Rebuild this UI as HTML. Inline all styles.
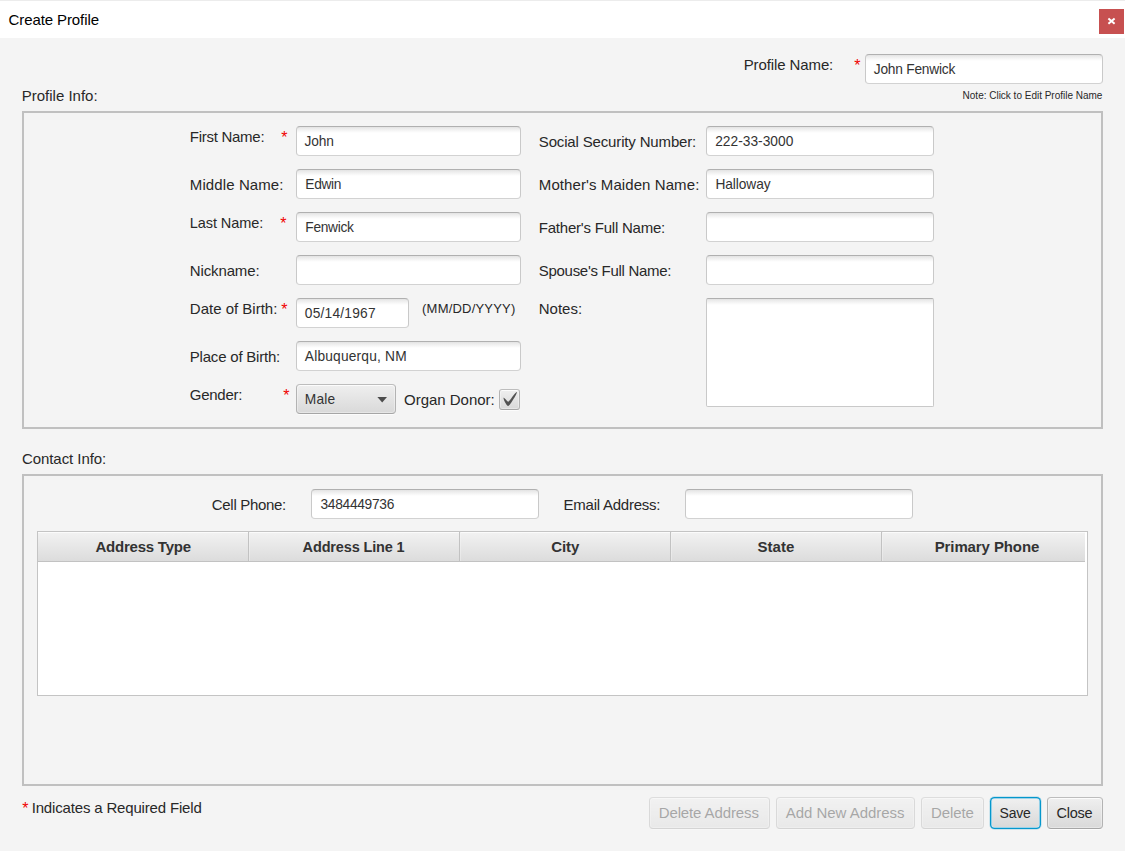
<!DOCTYPE html>
<html lang="en"><head><meta charset="utf-8"><title>Create Profile</title>
<style>
html,body{margin:0;padding:0}
body{width:1125px;height:851px;position:relative;overflow:hidden;background:#f4f4f4;font-family:"Liberation Sans",sans-serif}
.t{position:absolute;white-space:nowrap;line-height:1;margin:0;font-weight:400}
.abs{position:absolute;box-sizing:border-box}
.titlebar{left:0;top:0;width:1125px;height:38px;background:#fff;border-top:1px solid #ececec}
.closebtn{left:1099px;top:8px;width:25px;height:25px;background:#c75050}
.closebtn svg{display:block}
.grp{border:2px solid #c0c0c0}
.tf,.ta{border:1px solid #c9c9c9;border-top-color:#b0b0b0;background:linear-gradient(#e2e2e2 0,#e9e9e9 1px,#fbfbfb 5px,#fff 6px)}
.tf{height:30px;border-bottom-color:#d2d2d2;border-radius:4px}
.ta{border-radius:2px}
.btn{height:32px;border-radius:4px;border:1px solid #b3b3b3;border-top-color:#bdbdbd;border-bottom-color:#a6a6a6;background:linear-gradient(#efefef,#d9d9d9);box-shadow:inset 0 1px 0 rgba(255,255,255,.75),inset 0 0 0 1px rgba(255,255,255,.35),0 1px 0 rgba(255,255,255,.7)}
.dis{opacity:.4}
.chk{border-radius:3px}
.ast{color:#f00000;font-size:16px}
.tbl{border:1px solid #c4c4c4;background:#fff}
.thead{left:0;top:0;width:1047px;height:30px;background:linear-gradient(#f2f2f2,#dcdcdc);border-bottom:1px solid #c2c2c2;box-shadow:inset 0 1px 0 #fbfbfb}
.sep{top:0;width:2px;height:29px;border-left:1px solid #c2c2c2;background:linear-gradient(#f4f4f4,#e6e6e6)}
.focus{left:987px;top:794px}
</style></head>
<body>
<div class="abs titlebar"><span class="t" style="left:8.5px;top:11px;font-size:15px;color:#000;letter-spacing:-0.094px;">Create Profile</span><div class="abs closebtn"><svg width="25" height="25" viewBox="0 0 25 25"><path d="M9.4 9.5 L15.6 14.7 M15.6 9.5 L9.4 14.7" stroke="#fff" stroke-width="2" fill="none"/></svg></div></div>
<span class="t" style="left:743.7px;top:57px;font-size:15px;color:#282828;letter-spacing:-0.106px;">Profile Name:</span>
<span class="t ast" style="left:854.32px;top:57.65px">*</span>
<div class="abs tf" style="left:865px;top:54px;width:238px;"><span class="t" style="left:7.8px;top:8px;font-size:13.75px;color:#333;letter-spacing:-0.234px;">John Fenwick</span></div>
<span class="t" style="left:962.6px;top:91px;font-size:10px;color:#282828;letter-spacing:-0.008px;">Note: Click to Edit Profile Name</span>
<span class="t" style="left:21.8px;top:88px;font-size:15px;color:#282828;letter-spacing:-0.006px;">Profile Info:</span>
<div class="abs grp" style="left:22px;top:111px;width:1081px;height:318px;">
<span class="t" style="left:165.8px;top:16px;font-size:15px;color:#282828;letter-spacing:-0.272px;">First Name:</span>
<span class="t ast" style="left:257.32px;top:16.65px">*</span>
<div class="abs tf" style="left:272px;top:13px;width:225px;"><span class="t" style="left:7.5px;top:8px;font-size:13.75px;color:#333;letter-spacing:-0.143px;">John</span></div>
<span class="t" style="left:165.8px;top:64px;font-size:15px;color:#282828;letter-spacing:0.105px;">Middle Name:</span>
<div class="abs tf" style="left:272px;top:56px;width:225px;"><span class="t" style="left:8.3px;top:8px;font-size:13.75px;color:#333;letter-spacing:-0.338px;">Edwin</span></div>
<span class="t" style="left:165.8px;top:103px;font-size:14.5px;color:#282828;letter-spacing:-0.083px;">Last Name:</span>
<span class="t ast" style="left:256.37px;top:102.65px">*</span>
<div class="abs tf" style="left:272px;top:99px;width:225px;"><span class="t" style="left:8.3px;top:8px;font-size:13.75px;color:#333;letter-spacing:-0.306px;">Fenwick</span></div>
<span class="t" style="left:165.8px;top:150px;font-size:15px;color:#282828;letter-spacing:-0.132px;">Nickname:</span>
<div class="abs tf" style="left:272px;top:142px;width:225px;"></div>
<span class="t" style="left:165.8px;top:188px;font-size:15px;color:#282828;letter-spacing:0.004px;">Date of Birth:</span>
<span class="t ast" style="left:257.32px;top:188.65px">*</span>
<div class="abs tf" style="left:272px;top:185px;width:113px;"><span class="t" style="left:7.8px;top:8px;font-size:13.75px;color:#333;letter-spacing:0.219px;">05/14/1967</span></div>
<span class="t" style="left:398.1px;top:189px;font-size:13px;color:#282828;letter-spacing:0.200px;">(MM/DD/YYYY)</span>
<span class="t" style="left:165.8px;top:236px;font-size:15px;color:#282828;letter-spacing:-0.206px;">Place of Birth:</span>
<div class="abs tf" style="left:272px;top:228px;width:225px;"><span class="t" style="left:7.8px;top:8px;font-size:13.75px;color:#333;letter-spacing:0.188px;">Albuquerqu, NM</span></div>
<span class="t" style="left:165.8px;top:274px;font-size:15px;color:#282828;letter-spacing:-0.267px;">Gender:</span>
<span class="t ast" style="left:259.32px;top:274.65px">*</span>
<div class="abs btn" style="left:272px;top:271px;width:100px;height:30px;"><span class="t" style="left:7.8px;top:8px;font-size:13.75px;color:#333;letter-spacing:0.163px;">Male</span><svg width="10" height="6" viewBox="0 0 10 6" style="position:absolute;left:80px;top:12px"><path d="M0.4 0 L10 0 L5.2 5.4 Z" fill="#4c4c4c"/></svg></div>
<span class="t" style="left:380.0px;top:279px;font-size:15px;color:#282828;letter-spacing:-0.017px;">Organ Donor:</span>
<div class="abs btn chk" style="left:475px;top:276px;width:21px;height:21px;"><svg width="19" height="19" viewBox="0 0 19 19" style="position:absolute;left:0;top:0"><path transform="translate(3.8,2.7) scale(0.82)" d="M-0.25,6.083c0.843-0.758,4.583,4.833,5.75,4.833S14.5-1.5,15.917-0.917c1.292,0.532-8.75,17.083-10.5,17.083C3,16.167-1.083,6.833-0.25,6.083z" fill="#525252"/></svg></div>
<span class="t" style="left:514.8px;top:21px;font-size:15px;color:#282828;letter-spacing:-0.155px;">Social Security Number:</span>
<div class="abs tf" style="left:682px;top:13px;width:228px;"><span class="t" style="left:8.2px;top:8px;font-size:13.75px;color:#333;letter-spacing:0.012px;">222-33-3000</span></div>
<span class="t" style="left:514.8px;top:64px;font-size:15px;color:#282828;letter-spacing:0.087px;">Mother&#x27;s Maiden Name:</span>
<div class="abs tf" style="left:682px;top:56px;width:228px;"><span class="t" style="left:8.4px;top:8px;font-size:13.75px;color:#333;letter-spacing:-0.071px;">Halloway</span></div>
<span class="t" style="left:514.8px;top:107px;font-size:15px;color:#282828;letter-spacing:-0.217px;">Father&#x27;s Full Name:</span>
<div class="abs tf" style="left:682px;top:99px;width:228px;"></div>
<span class="t" style="left:514.8px;top:150px;font-size:15px;color:#282828;letter-spacing:-0.297px;">Spouse&#x27;s Full Name:</span>
<div class="abs tf" style="left:682px;top:142px;width:228px;"></div>
<span class="t" style="left:514.8px;top:188px;font-size:15px;color:#282828;letter-spacing:-0.012px;">Notes:</span>
<div class="abs ta" style="left:682px;top:185px;width:228px;height:109px;"></div>
</div>
<span class="t" style="left:21.9px;top:451px;font-size:15px;color:#282828;letter-spacing:-0.055px;">Contact Info:</span>
<div class="abs grp" style="left:22px;top:474px;width:1081px;height:312px;">
<span class="t" style="left:187.8px;top:21px;font-size:15px;color:#282828;letter-spacing:-0.306px;">Cell Phone:</span>
<div class="abs tf" style="left:287px;top:13px;width:228px;"><span class="t" style="left:8.4px;top:8px;font-size:13.75px;color:#333;letter-spacing:-0.276px;">3484449736</span></div>
<span class="t" style="left:539.6px;top:21px;font-size:15px;color:#282828;letter-spacing:-0.242px;">Email Address:</span>
<div class="abs tf" style="left:661px;top:13px;width:228px;"></div>
<div class="abs tbl" style="left:13px;top:55px;width:1051px;height:165px;"><div class="abs thead"><span class="t" style="left:57.4px;top:7px;font-size:15px;color:#333;letter-spacing:-0.218px;font-weight:700;">Address Type</span><span class="t" style="left:264.6px;top:8px;font-size:14.5px;color:#333;letter-spacing:-0.143px;font-weight:700;">Address Line 1</span><span class="t" style="left:513.2px;top:7px;font-size:15px;color:#333;letter-spacing:-0.048px;font-weight:700;">City</span><span class="t" style="left:719.4px;top:7px;font-size:15px;color:#333;letter-spacing:0.053px;font-weight:700;">State</span><span class="t" style="left:896.7px;top:7px;font-size:15px;color:#333;letter-spacing:-0.106px;font-weight:700;">Primary Phone</span></div><div class="abs sep" style="left:210px"></div><div class="abs sep" style="left:421px"></div><div class="abs sep" style="left:632px"></div><div class="abs sep" style="left:843px"></div></div>
</div>
<span class="t ast" style="left:22.37px;top:800.70px">*</span>
<span class="t" style="left:31.7px;top:800px;font-size:15px;color:#282828;letter-spacing:-0.167px;">Indicates a Required Field</span>
<div class="abs btn dis" style="left:649px;top:797px;width:121px;"><span class="t" style="left:8.7px;top:7px;font-size:15px;color:#333;letter-spacing:-0.118px;">Delete Address</span></div>
<div class="abs btn dis" style="left:776px;top:797px;width:139px;"><span class="t" style="left:8.8px;top:7px;font-size:15px;color:#333;letter-spacing:-0.038px;">Add New Address</span></div>
<div class="abs btn dis" style="left:921px;top:797px;width:63px;"><span class="t" style="left:9.0px;top:7px;font-size:15px;color:#333;letter-spacing:-0.092px;">Delete</span></div>
<svg class="abs focus" width="57" height="38" viewBox="0 0 57 38"><defs><linearGradient id="sg" x1="0" y1="0" x2="0" y2="1"><stop offset="0" stop-color="#efefef"/><stop offset="1" stop-color="#d9d9d9"/></linearGradient></defs><rect x="2.3" y="2.3" width="52.4" height="33.4" rx="5" fill="#0597cc" opacity=".22"/><rect x="3" y="3" width="51" height="32" rx="4.6" fill="#0597cc"/><rect x="4.3" y="4.3" width="48.4" height="29.4" rx="3.3" fill="#cfe7f2"/><rect x="5.1" y="5.1" width="46.8" height="27.8" rx="2.6" fill="url(#sg)"/></svg>
<span class="t" style="left:999.6px;top:806px;font-size:14px;color:#282828;letter-spacing:-0.241px;">Save</span>
<div class="abs btn" style="left:1047px;top:797px;width:56px;"><span class="t" style="left:8.6px;top:8px;font-size:14.5px;color:#282828;letter-spacing:-0.270px;">Close</span></div>
</body></html>
